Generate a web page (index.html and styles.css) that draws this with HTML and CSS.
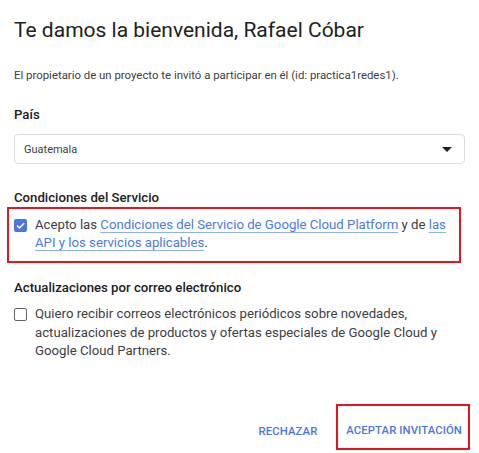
FILE: index.html
```html
<!DOCTYPE html>
<html lang="es">
<head>
<meta charset="utf-8">
<title>Te damos la bienvenida</title>
<link rel="stylesheet" href="styles.css">
</head>
<body>
<div class="dialog">
  <h1 class="title">Te damos la bienvenida, Rafael Cóbar</h1>
  <p class="intro">El propietario de un proyecto te invitó a participar en él (id: practica1redes1).</p>

  <div class="section">
    <div class="label">País</div>
    <div class="select">
      <span>Guatemala</span>
      <svg class="caret" width="10" height="5" viewBox="0 0 10 5"><path d="M0 0h10L5 5z" fill="#202124"/></svg>
    </div>
  </div>

  <div class="section terms-section">
    <div class="label">Condiciones del Servicio</div>
    <div class="highlight terms">
      <div class="check-row">
        <span class="box checked">
          <svg width="13" height="13" viewBox="0 0 13 13"><path d="M3 6.6l2.4 2.4 4.8-4.8" fill="none" stroke="#fff" stroke-width="1.5"/></svg>
        </span>
        <span class="check-text">Acepto las <a href="#">Condiciones del Servicio de Google Cloud Platform</a> y de <a href="#">las API y los servicios aplicables</a>.</span>
      </div>
    </div>
  </div>

  <div class="section mail-section">
    <div class="label">Actualizaciones por correo electrónico</div>
    <div class="check-row">
      <span class="box"></span>
      <span class="check-text">Quiero recibir correos electrónicos periódicos sobre novedades, actualizaciones de productos y ofertas especiales de Google Cloud y Google Cloud Partners.</span>
    </div>
  </div>

  <div class="actions">
    <button class="btn">RECHAZAR</button>
    <button class="btn accept">ACEPTAR INVITACIÓN</button>
  </div>
</div>
</body>
</html>
```
FILE: styles.css
```css
html, body {
  margin: 0;
  padding: 0;
  background: #ffffff;
}
body {
  font-family: Roboto, "Noto Sans", Arial, sans-serif;
  color: #202124;
}
.dialog {
  width: 479px;
  height: 453px;
  box-sizing: border-box;
  padding: 14px 14px 0 14px;
  display: flex;
  flex-direction: column;
}
.title {
  margin: 0;
  font-size: 21px;
  font-weight: 400;
  line-height: 32px;
  color: #202124;
}
.intro {
  margin: 21px 0 0 0;
  font-size: 11.4px;
  line-height: 16px;
  color: #3c4043;
}
.section {
  margin-top: 23px;
}
.label {
  font-size: 13.2px;
  font-weight: 500;
  line-height: 18px;
  color: #202124;
}
.select {
  margin-top: 10px;
  height: 30px;
  box-sizing: border-box;
  border: 1px solid #dadce0;
  border-radius: 4px;
  display: flex;
  align-items: center;
  justify-content: space-between;
  padding: 0 12px 0 9px;
  font-size: 11px;
  color: #3c4043;
  width: 451px;
}
.terms-section {
  margin-top: 25px;
}
.highlight {
  border: 2px solid #e5141f;
}
.terms {
  margin: 0 4px 0 -7px;
  padding: 7px 8px 10px 5px;
}
.check-row {
  display: flex;
  align-items: flex-start;
  gap: 8px;
}
.box {
  flex: none;
  width: 13px;
  height: 13px;
  box-sizing: border-box;
  border: 1.5px solid #5f6368;
  border-radius: 2px;
  margin-top: 3px;
}
.box.checked {
  border: none;
  background: #4a76de;
}
.box svg {
  display: block;
}
.check-text {
  font-size: 13.2px;
  line-height: 17.5px;
  color: #3c4043;
}
.mail-section .check-text {
  line-height: 18.5px;
}
.check-text a {
  color: #4a7be0;
  text-decoration: underline;
  text-decoration-color: #8fb0ee;
  text-underline-offset: 3px;
}
.mail-section {
  margin-top: 16px;
}
.mail-section .check-row {
  margin-top: 8px;
}
.actions {
  margin-top: auto;
  margin-bottom: 3px;
  display: flex;
  justify-content: flex-end;
  align-items: flex-end;
  gap: 19px;
  margin-right: -5px;
}
.btn {
  background: none;
  border: none;
  font-family: Roboto, Arial, sans-serif;
  font-size: 11.3px;
  font-weight: 500;
  letter-spacing: 0.1px;
  color: #4a76de;
  padding: 0;
  line-height: 14px;
  cursor: pointer;
}
.btn:first-child {
  margin-bottom: 11px;
}
.btn.accept {
  height: 46px;
  box-sizing: border-box;
  border: 2px solid #e5141f;
  padding: 8px 6px 0 8px;
}
```
